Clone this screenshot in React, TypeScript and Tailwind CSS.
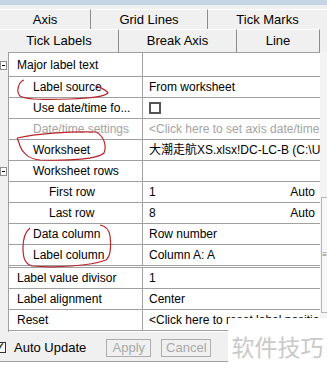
import React from "react";

type Row = {
  name: string;
  value?: string;
  extra?: string;
  indent: number;
  expander?: boolean;
  muted?: boolean;
  check?: boolean;
  h?: string;
  double?: boolean;
};

const rows: Row[] = [
  { name: "Major label text", indent: 0, expander: true, h: "h-[24px]" },
  { name: "Label source", value: "From worksheet", indent: 1 },
  { name: "Use date/time fo...", indent: 1, check: true },
  { name: "Date/time settings", value: "<Click here to set axis date/time", indent: 1, muted: true },
  { name: "Worksheet", value: "大潮走航XS.xlsx!DC-LC-B (C:\\Users", indent: 1 },
  { name: "Worksheet rows", indent: 1, expander: true },
  { name: "First row", value: "1", extra: "Auto", indent: 2 },
  { name: "Last row", value: "8", extra: "Auto", indent: 2 },
  { name: "Data column", value: "Row number", indent: 1 },
  { name: "Label column", value: "Column A: A", indent: 1, double: true },
  { name: "Label value divisor", value: "1", indent: 0 },
  { name: "Label alignment", value: "Center", indent: 0 },
  { name: "Reset", value: "<Click here to reset label positions>", indent: 0 },
];

const indentCls = ["pl-[8px]", "pl-[24px]", "pl-[40px]"];

function Tab({ label, w, last }: { label: string; w: string; last?: boolean }) {
  return (
    <div
      className={`${w} h-full flex items-center justify-center border-t border-white ${
        last ? "" : "border-r border-r-[#8c8c8c]"
      }`}
    >
      {label}
    </div>
  );
}

export default function App() {
  return (
    <div
      className="relative w-[327px] h-[370px] overflow-hidden bg-[#f0f0f0] text-black"
      style={{ fontFamily: '"Liberation Sans", "Noto Sans CJK SC", sans-serif' }}
    >
      {/* window frame strip */}
      <div className="h-[5px] bg-[#c6d5e5]" />

      {/* tabs */}
      <div className="h-[24px] flex text-[13px] pt-[4px]">
        <Tab label="Axis" w="w-[91px]" />
        <Tab label="Grid Lines" w="w-[117px]" />
        <Tab label="Tick Marks" w="flex-1" last />
      </div>
      <div className="h-[23px] flex text-[13px]">
        <Tab label="Tick Labels" w="w-[119px]" />
        <Tab label="Break Axis" w="w-[118px]" />
        <Tab label="Line" w="w-[83px]" />
        <div className="flex-1" />
      </div>

      {/* property grid */}
      <div className="flex h-[280px]">
        <div className="w-[8px] flex flex-col">
          <div className="h-[1px]" />
          {rows.map((r, i) => (
            <div key={i} className={`${r.h ?? "h-[21px]"} ${r.double ? "h-[23px]" : ""} flex items-center`}>
              {r.expander && (
                <div className="w-[7px] h-[9px] border border-[#8f8f8f] bg-white flex items-center justify-center">
                  <div className="w-[3px] h-[1px] bg-black" />
                </div>
              )}
            </div>
          ))}
        </div>
        <div className="w-[312px] overflow-hidden border-l border-t border-[#a0a0a0] bg-white text-[12px]">
          {rows.map((r, i) => (
            <div
              key={i}
              className={`flex ${r.h ?? "h-[21px]"} ${
                r.double ? "h-[23px] border-b-[3px] border-double" : "border-b"
              } border-[#a0a0a0]`}
            >
              <div
                className={`w-[133px] shrink-0 flex items-center whitespace-nowrap ${indentCls[r.indent]} ${
                  r.muted ? "text-[#a3a3a3]" : ""
                }`}
              >
                {r.name}
              </div>
              <div
                className={`flex-1 border-l border-[#a0a0a0] flex items-center pl-[6px] pr-[5px] whitespace-nowrap overflow-hidden ${
                  r.muted ? "text-[#a3a3a3]" : ""
                }`}
              >
                {r.check && <div className="w-[12px] h-[12px] border-2 border-[#555]" />}
                {r.value && <span>{r.value}</span>}
                {r.extra && <span className="ml-auto">{r.extra}</span>}
              </div>
            </div>
          ))}
        </div>
        <div className="flex-1 flex flex-col bg-[#f4f4f4] pt-[145px]">
          <div className="h-[116px] ml-[1px] border border-r-0 border-[#b5b5b5] bg-[#f7f7f7] flex items-center justify-center">
            <div className="text-[8px] leading-none text-[#777]">≡</div>
          </div>
        </div>
      </div>

      {/* bottom bar */}
      <div className="h-[30px] flex items-center text-[13px] border-b border-[#a0a0a0] pt-[2px]">
        <div className="w-[6px] h-[11px] border border-l-0 border-[#333] bg-white flex items-center overflow-hidden">
          <span className="text-[10px] leading-none font-bold -ml-[4px]">✓</span>
        </div>
        <span className="ml-[8px]">Auto Update</span>
        <button className="ml-[20px] w-[45px] h-[18px] border border-[#adadad] text-[#a8a8a8] bg-[#f0f0f0] text-[13px] leading-none">
          Apply
        </button>
        <button className="ml-[10px] w-[50px] h-[18px] border border-[#adadad] text-[#a8a8a8] bg-[#f0f0f0] text-[13px] leading-none">
          Cancel
        </button>
      </div>
      <div className="h-[8px] bg-white" />

      {/* watermark */}
      <div className="absolute left-[228px] top-[318px] right-0 bottom-0 bg-white flex items-center justify-center pt-[4px]">
        <span
          className="text-[23px] text-[#c9c9c9] tracking-[0px]"
          style={{ fontFamily: '"Noto Sans CJK SC", sans-serif' }}
        >
          软件技巧
        </span>
      </div>

      {/* red hand-drawn marks */}
      <svg className="absolute inset-0 pointer-events-none" width="327" height="370" viewBox="0 0 327 370" fill="none">
        <path
          d="M24 80 C18 82 16 92 20 96 C26 100 45 100 70 99 C90 98 104 97 108 93 C106 89 98 87 96 86"
          stroke="#b8262c"
          strokeWidth="1.2"
        />
        <path
          d="M17 138 C35 134 70 131 96 132 C104 136 107 146 104 153 C98 159 70 161 40 160 C28 159 22 152 20 146 C19 142 18 140 17 138"
          stroke="#b8262c"
          strokeWidth="1.2"
        />
        <path
          d="M30 228 C25 232 23 240 23 248 C23 258 25 264 32 266 C55 268 90 266 106 260 C111 256 111 245 110 236 C109 229 106 226 100 225"
          stroke="#b8262c"
          strokeWidth="1.2"
        />
      </svg>
    </div>
  );
}
